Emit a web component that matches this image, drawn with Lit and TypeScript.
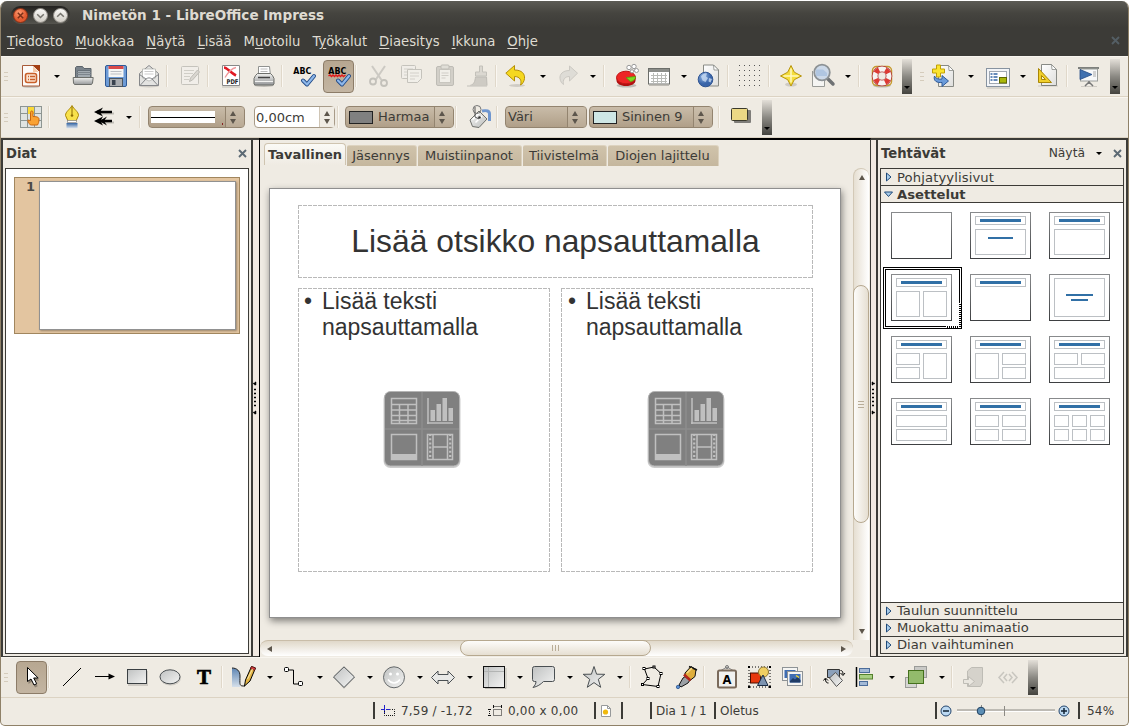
import { LitElement, html, svg, css } from "lit";
import { customElement } from "lit/decorators.js";

/** A bar entry: centre on the bar, width, content. */
type Item = [number, number, unknown];

const icon = (body: unknown, faded = false) =>
  html`<svg class=${faded ? "ic faded" : "ic"} width="26" height="26" viewBox="0 0 26 26">${body}</svg>`;

const page = svg`<path d="M5.5 2.5h10l5 5v16h-15z" fill="url(#paper)" stroke="#888a85"/><path d="M15.5 2.500l.5 5 4.500 0z" fill="#fff" stroke="#888a85" stroke-width=".8"/>`;
const check = svg`<path d="M12 17.500l4 4 7-8.500" fill="none" stroke="#204a87" stroke-width="4" stroke-linejoin="round" stroke-linecap="round"/><path d="M12 17.500l4 4 7-8.500" fill="none" stroke="#8db7ea" stroke-width="2.200" stroke-linejoin="round" stroke-linecap="round"/>`;
const abcText = svg`<text x="2.300" y="11" font-size="9.500" font-weight="700" fill="#000" textLength="18" lengthAdjust="spacingAndGlyphs">ABC</text>`;

const I = {
  fresh: svg`<ellipse cx="13" cy="23.500" rx="9" ry="1.300" fill="#0003"/><path d="M4.500 2.500h11l6 6v14.500h-17z" fill="#fdfaf7" stroke="#a85a38"/><path d="M14 2h8v7z" fill="#a33e12"/><path d="M15 3.500l5.500 5.500h-5.500z" fill="#f6c9a8"/><rect x="7.500" y="10.500" width="11" height="9" rx="2" fill="#fbe3d0" stroke="#c9602a" stroke-width="1.600"/><path d="M10 13.500h1M12 13.500h5M10 16.500h1M12 16.500h5" stroke="#c9602a" stroke-width="1.300"/>`,
  open: svg`<path d="M5.500 15V4.500l1-1h6l1.500 2h7v9z" fill="#7b848c" stroke="#5c646b"/><path d="M7.500 7.500h13v8h-13z" fill="#a3abb1" stroke="#69727a"/><path d="M7 9.500h14M7 11.500h14" stroke="#7d858c"/><path d="M3.200 14.500h20l-.7 5.500-1 1.500h-17l-1-1.500z" fill="url(#grey)" stroke="#6d6f6b"/>`,
  save: svg`<rect x="2.500" y="2.500" width="21" height="21" rx="1.500" fill="#6d9bd6" stroke="#2f5a97"/><rect x="5.500" y="3" width="15" height="11" fill="#f6f6f4"/><rect x="5.500" y="3" width="15" height="3" fill="#d94a4a"/><path d="M7.500 8.500h11M7.500 11h11" stroke="#bcbfc4"/><rect x="6.500" y="15.500" width="13" height="8" fill="#a9acb0" stroke="#4c5660"/><rect x="9" y="17" width="3.500" height="5" fill="#39424e"/>`,
  mail: svg`<ellipse cx="13" cy="23" rx="10" ry="1.500" fill="#0002"/><path d="M3.500 10.500L13 2.500l9.500 8v12h-19z" fill="#e3e3e1" stroke="#85878a"/><path d="M6.500 15V6h13v9L13 18z" fill="#fff" stroke="#aaaca8" stroke-width=".7"/><path d="M8.500 8.500h9M8.500 11h9" stroke="#ccc"/><path d="M3.500 11.500l6.500 4.500-6 6.500M22.500 11.500L16 16l6 6.500M10 16c2-1.500 4-1.500 6 0" fill="none" stroke="#85878a"/>`,
  edit: svg`<rect x="4.500" y="3.500" width="17" height="18" rx="1" fill="#f3f2ef" stroke="#9d9c97"/><path d="M7 7.500h10M7 10.500h9M7 13.500h6M7 16.500h5" stroke="#b3b2ad"/><path d="M12.500 18.500l1-3.500 7-8 2 2-7 8z" fill="#c4c3be" stroke="#8f8e89"/>`,
  pdf: svg`<path d="M4.500 2.500h17v20h-17z" fill="#fff" stroke="#888"/><path d="M4 24h18" stroke="#0003"/><path d="M6 4.500c3 0 6 5 12 8" stroke="#e11923" stroke-width="2.600" fill="none"/><path d="M18 4.500c-5 1-8 5-11 10" stroke="#f0999c" stroke-width="1.300" fill="none"/><text x="8.500" y="21.300" font-size="6.500" font-weight="700" fill="#222" textLength="12" lengthAdjust="spacingAndGlyphs">PDF</text>`,
  print: svg`<ellipse cx="13" cy="22.500" rx="10" ry="1.500" fill="#0003"/><path d="M7.500 13V3.500h11l1 9.500z" fill="#fff" stroke="#909290"/><path d="M9.500 6h7M9.500 8.500h7" stroke="#bbb"/><path d="M4.500 12.500l2-2h13l2 2 1.500 3v5.500l-1 1h-18l-1-1v-5.500z" fill="url(#grey)" stroke="#6d6f6b"/><path d="M7 14.500h12" stroke="#444" stroke-width="1.500"/><path d="M4 18.500h18" stroke="#f2f2f0"/>`,
  abc: svg`${abcText}${check}`,
  abcAuto: svg`${abcText}<path d="M2.500 13l1.500-1 1.500 1.500 1.500-1.500 1.500 1.500 1.500-1.500 1.500 1.500 1.500-1.500 1.500 1.500 1.500-1.500 1.500 1.500 2-1.500" fill="none" stroke="#e01b1b" stroke-width="1.500"/>${check}`,
  cut: svg`<path d="M6 3l9.500 14M19 3L9.500 17" stroke="#aaa9a4" stroke-width="2" fill="none"/><circle cx="7" cy="18.500" r="3" fill="none" stroke="#999893" stroke-width="1.800"/><circle cx="18" cy="20" r="3" fill="none" stroke="#999893" stroke-width="1.800"/>`,
  copy: svg`<rect x="2.500" y="2.500" width="14" height="13" rx="1" fill="#f1f0ed" stroke="#9d9c97"/><path d="M5 6h9M5 9h9M5 12h5" stroke="#b9b8b3"/><path d="M8.500 6.500h14v9l-4 4h-10z" fill="#f4f3f0" stroke="#9d9c97"/><path d="M11 10h9M11 13h9M11 16h5" stroke="#b9b8b3"/>`,
  paste: svg`<rect x="4.500" y="3.500" width="17" height="19" rx="1.500" fill="#b7b5ae" stroke="#8f8e89"/><rect x="7.500" y="6.500" width="11" height="13" fill="#f4f3f0" stroke="#a3a29d"/><rect x="9" y="2" width="8" height="4" rx="1" fill="#d3d2cd" stroke="#8f8e89"/><path d="M9.500 10h7M9.500 12.500h7M9.500 15h4" stroke="#b3b2ad"/>`,
  brush: svg`<path d="M14.500 3h3v6h4v4h-11v-4h4z" fill="#c9c7c1" stroke="#999893"/><path d="M10.500 14h11l.5 8.500H5c4-1 5-4 5.500-8.500z" fill="#aeaca6" stroke="#8f8e89"/><path d="M2 23h20" stroke="#b3b2ad" stroke-width="1.500"/>`,
  undo: svg`<ellipse cx="14" cy="22.500" rx="8" ry="1.500" fill="#0002"/><path d="M2.800 10.200L11.500 2.500v4.500c7.500 0 10.500 4 10 8.500-.3 3-2 5.500-4 6.500 1.500-4.500-.5-8.500-6-8.500v4.500z" fill="#f5d820" stroke="#b58f08" stroke-linejoin="round"/>`,
  redo: svg`<path d="M22.500 10.200L14.500 3v4.500c-7 0-10 4-9.500 8 .3 3 2 5 3.500 6-1-4.500 1-8 6-8v4.500z" fill="#cfceca" stroke="#a8a7a2" stroke-linejoin="round"/>`,
  chart: svg`<ellipse cx="12.500" cy="22.500" rx="10" ry="2" fill="#0003"/><path d="M2.500 14.500v3c0 3 4 5.500 9.500 5.500s9.500-2.500 9.500-5.500v-3z" fill="#b01010"/><ellipse cx="12" cy="14.500" rx="9.500" ry="6.300" fill="#ee2626" stroke="#c11616"/><path d="M12 14.500l9.500-1c.3 2.500-2 4.500-5 5.200z" fill="#7bd91f" stroke="#4f9a09" stroke-width=".7"/><circle cx="15" cy="4.500" r="2.200" fill="#fff" stroke="#999"/><circle cx="20" cy="3.500" r="2.200" fill="#fff" stroke="#999"/><circle cx="22.500" cy="7.500" r="2" fill="#fff" stroke="#999"/><circle cx="18" cy="8.300" r="1.600" fill="#fff" stroke="#999"/>`,
  table: svg`<rect x="2.500" y="5.500" width="21" height="15.500" fill="#fff" stroke="#6c6e6a"/><path d="M3 6h20v3H3z" fill="#8b8d89"/><path d="M5 12.500h16M5 15.500h16M5 18.500h16M7.500 10v10M11.500 10v10M15.500 10v10M19.500 10v10" stroke="#b9bbb7"/><path d="M3 22.500h20" stroke="#0003"/>`,
  web: svg`<g transform="translate(2 -.500)">${page}</g><circle cx="9.500" cy="16.500" r="7.300" fill="url(#globe)" stroke="#2f5492"/><path d="M5 13.500c2-3 4-3.500 6-3l-1 3 2 1.500-2.500 4-3-1.500zM13 15l3 1-1.500 3.500-2-1z" fill="#c2d6f0" opacity=".85"/>`,
  grid: svg`${[3, 8, 13, 18, 23].map((y) => [2, 7, 12, 17, 22].map((x) => svg`<rect x=${x} y=${y - 1} width="1" height="1" fill="#555"/>`))}`,
  star4: svg`<ellipse cx="13" cy="21.500" rx="6" ry="2" fill="#0002"/><path d="M13 2.500l3.300 6.700 7.200 3.800-7.200 3.700L13 23l-3.300-6.300L2.500 13l7.200-3.800z" fill="#f4dd3c" stroke="#b9960f" stroke-linejoin="round"/><path d="M13 5.500v14M5.500 13h15" stroke="#fff9c0" stroke-width="1.500"/>`,
  zoom: svg`<path d="M2.500 8v15.500h12V10" fill="#f5f5f3" stroke="#999b97"/><path d="M17 15l6 6" stroke="#6f7274" stroke-width="3.500" stroke-linecap="round"/><circle cx="12" cy="9.500" r="7.800" fill="#ccd9e9" stroke="#8d9295" stroke-width="1.800"/><path d="M6 13V6.500h7l4 3.500v3z" fill="#a9c1df" opacity=".8"/>`,
  help: svg`<ellipse cx="13" cy="22.500" rx="9" ry="2" fill="#0003"/><rect x="3.500" y="3.500" width="19" height="19" rx="4" fill="none" stroke="#c69a2d" stroke-width="1.500"/><circle cx="13" cy="13" r="7" fill="none" stroke="#b13a3a" stroke-width="6.600"/><circle cx="13" cy="13" r="7" fill="none" stroke="#f6f4f2" stroke-width="5"/><circle cx="13" cy="13" r="7" fill="none" stroke="#dd3a34" stroke-width="5" stroke-dasharray="4.500 6.495" stroke-dashoffset="-3.250"/>`,
  newSlide: svg`<g transform="translate(2 0)">${page}</g><path d="M6 2.500h4v4h4v4h-4v4H6v-4H2v-4h4z" fill="#fbe42f" stroke="#c1a005" transform="translate(-.500 -.500)"/><path d="M3.500 13c-1.500 5 2.500 7 7.500 6.500v4L17.500 18 11 12.500v3.500c-3 .3-6 0-7.500-3z" fill="#6b9bda" stroke="#2f5a97"/>`,
  layout: svg`<rect x="1.500" y="5.500" width="23" height="18" fill="#f3f5f8" stroke="#8793a0"/><rect x="4.500" y="8.500" width="17" height="12" fill="#fff" stroke="#a0a8b2"/><path d="M5.500 11h2M8.500 11h4M5.500 14h2M8.500 14h4M5.500 17h2M8.500 17h4" stroke="#3465a4" stroke-width="1.300"/><rect x="14.500" y="14.500" width="7" height="5.500" fill="#a9b80b" stroke="#5f6804"/><path d="M2 25h23" stroke="#0003"/>`,
  design: svg`<g transform="translate(1 -1)">${page}</g><path d="M3.500 5.500v14h13z" fill="#f0cf2c" stroke="#a98605"/><path d="M6.500 12.500v4h4z" fill="#fbf3cd" stroke="#a98605"/><path d="M3 23h20" stroke="#0002"/>`,
  present: svg`<path d="M2 5h21" stroke="#7e807d" stroke-width="2"/><rect x="4.500" y="6" width="17" height="12" fill="#f7f8f9" stroke="#9c9f9c"/><path d="M4 6.500l12 5-12 5z" fill="#3f70b0" stroke="#234a85" stroke-width=".8"/><path d="M17 9h3M17 11h3M17 13h3" stroke="#aaa"/><path d="M13 18v3M13 19l-4 4M13 19l4 4" stroke="#777" stroke-width="1.500"/><path d="M5 23.500h16" stroke="#0002"/>`,
  tableHand: svg`<rect x="2.500" y="2.500" width="21" height="21" fill="#dfe3e1" stroke="#8d9592"/><path d="M9.500 2v22M16.500 2v22M2 9.500h22M2 16.500h22" stroke="#8d9592"/><path d="M10 3h6v7h-6z" fill="#fbd936"/><path d="M12.500 21c-2-2-3-3.500-2.500-5l2.500.5V8.500c0-2 2.500-2 2.500 0v4c3 0 6 .5 6 2.500 0 3-.5 4-1.500 6h-6z" fill="#f9a234" stroke="#c9660f"/>`,
  nib: svg`<path d="M13 1.500c2 4 6.500 6 6.500 10L17 17H9L6.500 11.500c0-4 4.500-6 6.500-10z" fill="#f8e14b" stroke="#a98605"/><path d="M13 2.500v8" stroke="#8c6d04"/><circle cx="13" cy="11.500" r="1.300" fill="#8c6d04"/><rect x="8.500" y="16.500" width="9" height="2" fill="#fff" stroke="#888" stroke-width=".7"/><path d="M7.500 19h11v5.500h-11z" fill="url(#blueFade)"/>`,
  lineEnds: svg`<path d="M6 9.500h17M9 18.500h14" stroke="#0003" stroke-width="2"/><path d="M6 8h15M9 17h12" stroke="#000" stroke-width="2.600"/><path d="M3 8l9-4.500-3 4.500 3 4.500zM3 17l9-4.500-2 3.500 6-3.500-3 4.500 3 4.500-6-3.500 2 3.500z" fill="#000"/>`,
  can: svg`<path d="M15 7c5-1 7.500 0 7.500 3v7" fill="none" stroke="#6f96cf" stroke-width="3"/><path d="M3 16L12 7l8 8-8 8.500-6.500-1z" fill="url(#can)" stroke="#6d6f6b"/><path d="M5.500 15.500L12 9.500M8.500 18.500l6.500-6.500" stroke="#fff" stroke-width="1.500"/><ellipse cx="10" cy="5.500" rx="4" ry="4" fill="none" stroke="#777"/><path d="M8 3v10l4 2" fill="none" stroke="#555"/><circle cx="12.500" cy="13.500" r="1.300" fill="#333"/>`,
  shadow: svg`<rect x="5" y="6" width="17" height="13" rx="1" fill="#0007"/><rect x="2.500" y="4.500" width="16" height="12" rx="1" fill="#ebd885" stroke="#3b3a2c"/>`,
  pointer: svg`<path d="M8.500 4.500v14l3.500-2.500 3 6 2.700-1.300-3-5.700h4.500z" fill="#0004" transform="translate(1 1.500)"/><path d="M8.500 3.500v14l3.500-2.500 3 6 2.700-1.300-3-5.700h4.500z" fill="#fff" stroke="#000"/>`,
  line: svg`<path d="M4 22L22 4" stroke="#000"/>`,
  arrow: svg`<path d="M3 12.500h14" stroke="#000"/><path d="M16.500 9.500l6.500 3-6.500 3z" fill="#000"/>`,
  rect: svg`<rect x="4" y="7" width="20" height="15" fill="#0002"/><rect x="3.500" y="5.500" width="19" height="14" fill="url(#shape)" stroke="#3a3f42"/>`,
  ellipse: svg`<ellipse cx="13.500" cy="14" rx="10.500" ry="7.500" fill="#0002"/><ellipse cx="13" cy="12.800" rx="10" ry="7" fill="url(#shape)" stroke="#4a4f52"/>`,
  text: svg`<text x="13" y="20" text-anchor="middle" class="serif" font-size="21" font-weight="700" fill="#000" stroke="#000" stroke-width=".700">T</text>`,
  curve: svg`<path d="M1 4c5 0 8 3 8 8v11H1z" fill="url(#curveBlue)"/><path d="M1 4c5 0 8 3 8 8 0 7-1 10 3 10h2" fill="none" stroke="#222"/><path d="M13.500 22l1-6 6-13.500 4 1.500-5.500 13z" fill="#e2b343" stroke="#000"/><path d="M19.500 4.500l1-2 4 1.500-1 2.500z" fill="#d84040" stroke="#5a1313" stroke-width=".7"/><path d="M16.500 15l5-10" stroke="#fae7a8"/>`,
  connector: svg`<path d="M6 6h6.500v14H20" fill="none" stroke="#000"/><rect x="3.500" y="3.500" width="4" height="4" rx="1" fill="#fff" stroke="#000"/><rect x="17.500" y="17.500" width="4" height="4" rx="1" fill="#fff" stroke="#000"/>`,
  diamond: svg`<path d="M13 4l10.500 10L13 25 3 14z" fill="#0002"/><path d="M13 2.800L23.500 13 13 23.500 2.500 13z" fill="url(#shape)" stroke="#4a4f52"/>`,
  smiley: svg`<circle cx="13" cy="13.300" r="10.500" fill="url(#shape)" stroke="#65696b"/><circle cx="9.500" cy="10" r="1.500" fill="#fff"/><circle cx="16.500" cy="10" r="1.500" fill="#fff"/><path d="M7 15.500c3 4.500 9 4.500 12 0" fill="none" stroke="#fff" stroke-width="1.500"/>`,
  both: svg`<path d="M1.500 13.500L8 7v3.500h10V7l6.500 6.500L18 20v-3.500H8V20z" fill="#e9e9e7" stroke="#4a4f52"/>`,
  flow: svg`<path d="M4 24.500h21V4" fill="none" stroke="#0003"/><rect x="2.500" y="2.500" width="21" height="21" fill="url(#shape)" stroke="#111"/><path d="M7.500 3v20M3 7.500h20" stroke="#b2b4b3"/>`,
  callout: svg`<path d="M4.500 2.500h18q2 0 2 2v11q0 2-2 2h-9c-3 3-6 5-10.500 6 2-2 3-4 3-6H4.500q-2 0-2-2v-11q0-2 2-2z" fill="url(#shape)" stroke="#4a4f52"/>`,
  star5: svg`<path d="M13 2.500l2.600 7.700 8.200.1-6.500 5 2.400 8-6.700-4.700-6.700 4.700 2.400-8-6.500-5 8.200-.1z" fill="url(#shape)" stroke="#4a4f52"/>`,
  points: svg`<path d="M5.500 5L15 3l7 6.500-3 13L3.500 20.500 9 14.500z" fill="none" stroke="#000"/>${[[5, 4.5], [15, 3], [22, 9.5], [19, 22.5], [3.5, 20.5], [9, 14.5]].map(([x, y]) => svg`<rect x=${x - 1} y=${y - 1} width="2" height="2" fill="#fff" stroke="#000"/>`)}`,
  glue: svg`<path d="M5 21l4-7 3-2 4 4-2 3-7 4z" fill="#9ba0a5" stroke="#111"/><path d="M11 9l6-6.500 5 3-1 7-5 4-5-4z" fill="#dfae3c" stroke="#111"/><path d="M10 10.500l6.500 6" stroke="#b3261b" stroke-width="2.500"/><path d="M15 2.500l8 3.500" stroke="#111" stroke-width="1.500"/><path d="M13 9l5-5" stroke="#f7dc8c" stroke-width="1.500"/><circle cx="4" cy="23" r="1.700" fill="#5b8fd2" stroke="#204a87" stroke-width=".7"/>`,
  fontwork: svg`<path d="M6 7l7-4 7 4" fill="none" stroke="#888"/><circle cx="13" cy="3" r="1.500" fill="none" stroke="#777"/><rect x="4" y="6.500" width="18" height="17" rx="1.500" fill="#f1f1ef" stroke="#7a6a5b" stroke-width="2"/><text x="13" y="19.500" text-anchor="middle" font-size="11.500" font-weight="700" fill="#000">A</text>`,
  fromFile: svg`<rect x="3" y="3" width="21" height="20" fill="none" stroke="#000" stroke-dasharray="1 2"/><rect x="4.500" y="9" width="10" height="10" fill="#e8380d" stroke="#4a0d00"/><circle cx="17.500" cy="8" r="5" fill="#f0cf62" stroke="#8b7330"/><path d="M17 11l5 10.500H11.500z" fill="#7c93b0" stroke="#1b2c44"/><path d="M2 2h2v2H2zM23 2h2v2h-2zM2 22h2v2H2zM23 22h2v2h-2z" fill="#000"/>`,
  gallery: svg`<rect x="2.500" y="3.500" width="15" height="13" fill="#f5f5f3" stroke="#8e9396"/><rect x="4.500" y="6" width="11" height="8" fill="#3f6db2"/><rect x="7.500" y="7.500" width="15" height="14" fill="#f5f5f3" stroke="#8e9396"/><rect x="9.500" y="10" width="11" height="8.500" fill="#3f6db2"/><path d="M10 17l3-3 2 1.500 2.500-2.500 3 3v2.500H10z" fill="#1f3b66"/><path d="M16 11.500l3 2" stroke="#f4d92d" stroke-width="1.500"/>`,
  rotate: svg`<path d="M6.500 5.500h12v8h-12z" fill="#8ba0ba" stroke="#333"/><path d="M8.500 14l6-5.500 7 8-6 6z" fill="url(#shape)" stroke="#555"/><path d="M19.500 6.500c2 0 2.500 1.500 2.500 4M4.500 15c0 3 1 4 3 4M2.500 16.500l2-2.500 2.500 2.500M19.500 9l2.500 2.500 2-2.500" fill="none" stroke="#000"/>`,
  align: svg`<path d="M4.500 3v20" stroke="#000" stroke-width="1.500"/><rect x="7.500" y="4.500" width="10" height="4" fill="#a3b9d6" stroke="#4b6c9a"/><rect x="7.500" y="10.500" width="13" height="4.500" fill="#a9cf83" stroke="#54802c"/><rect x="7.500" y="17.500" width="8" height="4" fill="#a3b9d6" stroke="#4b6c9a"/>`,
  arrange: svg`<rect x="11.500" y="2.500" width="12" height="11" fill="#c9c9c6" stroke="#9a9b98"/><rect x="2.500" y="13.500" width="11" height="10" fill="#d5d5d2" stroke="#9a9b98"/><rect x="5.500" y="6.500" width="15" height="13" fill="#93bb6c" stroke="#44701c"/>`,
  extrude: svg`<path d="M6.500 7l4-3.500h11v15l-2 4h-13z" fill="#bcbab4" stroke="#8f8e89"/><path d="M2.500 15.500h5v-3l6 5-6 5v-3h-5z" fill="#e4e2dd" stroke="#8f8e89"/>`,
  chevrons: svg`<path d="M9 8l-5 5.500 5 5.500M12 10l-3 3.500 3 3.500M17 8l5 5.500-5 5.500M14 10l3 3.500-3 3.500" fill="none" stroke="#a3a29d" stroke-width="1.500"/>`,
};

const down = html`<i class="down"></i>`;
const sep = html`<i class="sep"></i>`;
const grip = html`<i class="grip"></i>`;
const more = html`<i class="more"><i class="down"></i></i>`;
const stepper = html`<span class="step"><i class="up"></i><i class="dn"></i></span>`;

const ic = (c: number, body: unknown, faded = false): Item => [c, 26, icon(body, faded)];
const dn = (c: number): Item => [c, 6, down];
const sp = (c: number): Item => [c, 2, sep];
const gr = (c: number): Item => [c, 4, grip];
const ov = (c: number): Item => [c, 10, more];
const on = (c: number, body: unknown): Item => [c, 31, html`<span class="pressed">${icon(body)}</span>`];

const standard: Item[] = [
  gr(6), ic(31, I.fresh), dn(57), ic(83, I.open), ic(116, I.save), ic(149, I.mail), sp(167), ic(190, I.edit, true), sp(208),
  ic(231, I.pdf), ic(264, I.print), sp(282), ic(304, I.abc), on(338.5, I.abcAuto), sp(356), ic(379, I.cut, true),
  ic(412, I.copy, true), ic(445, I.paste, true), ic(478, I.brush, true), sp(496), ic(516, I.undo), dn(543), ic(568, I.redo, true),
  dn(593), sp(604), ic(627, I.chart), ic(659, I.table), dn(684), ic(709, I.web), sp(728), ic(750, I.grid), sp(769),
  ic(791, I.star4), ic(823, I.zoom), dn(848), sp(859), ic(882, I.help), ov(907), gr(922), ic(944, I.newSlide), dn(971),
  ic(998, I.layout), dn(1023), ic(1048, I.design), sp(1067), ic(1089, I.present), ov(1115),
];

const formatting: Item[] = [
  gr(6), ic(31, I.tableHand), sp(49), ic(72, I.nib), ic(104, I.lineEnds), dn(129), sp(140),
  [196.5, 97, html`<span class="combo"><span class="linestyle"></span><b class="dot"></b>${stepper}</span>`],
  [294.5, 81, html`<span class="spin"><span class="grow">0,00cm</span>${stepper}</span>`],
  sp(338),
  [399.5, 109, html`<span class="combo"><i class="swatch gray"></i><span class="grow">Harmaa</span>${stepper}</span>`],
  sp(456), ic(480, I.can), sp(497),
  [546, 82, html`<span class="combo"><span class="grow near">Väri</span>${stepper}</span>`],
  [651, 124, html`<span class="combo"><i class="swatch blue"></i><span class="grow">Sininen 9</span>${stepper}</span>`],
  sp(719), ic(742, I.shadow), ov(767),
];

const drawing: Item[] = [
  gr(6), on(31.5, I.pointer), sp(49), ic(72, I.line), ic(105, I.arrow), ic(137, I.rect), ic(170, I.ellipse), ic(204, I.text), sp(222),
  ic(244, I.curve), dn(270), ic(294, I.connector), dn(320), ic(344, I.diamond), dn(370), ic(394, I.smiley), dn(420),
  ic(443, I.both), dn(470), ic(494, I.flow), dn(520), ic(543, I.callout), dn(570), ic(594, I.star5), dn(620), sp(630),
  ic(652, I.points), ic(687, I.glue), sp(704), ic(727, I.fontwork), ic(759, I.fromFile), ic(793, I.gallery), sp(811),
  ic(834, I.rotate), ic(865, I.align), dn(892), ic(916, I.arrange), dn(942), sp(952), ic(974, I.extrude, true),
  ic(1008, I.chevrons, true), ov(1033),
];

const menus: [string, string, string][] = [
  ["", "T", "iedosto"], ["", "M", "uokkaa"], ["", "N", "äytä"], ["", "L", "isää"], ["M", "u", "otoilu"],
  ["T", "y", "ökalut"], ["", "D", "iaesitys"], ["", "I", "kkuna"], ["", "O", "hje"],
];

const tabs: [string, number][] = [["Jäsennys", 70], ["Muistiinpanot", 104], ["Tiivistelmä", 84], ["Diojen lajittelu", 111]];

type Box = [number, number, number, number];
const T: Box = [5, 4, 51, 9];
const B: Box = [10, 7, 41, 3];
const layouts: { boxes: Box[]; bars: Box[] }[] = [
  { boxes: [], bars: [] },
  { boxes: [T, [5, 17, 51, 26]], bars: [B, [18, 25, 25, 2]] },
  { boxes: [T, [5, 17, 51, 26]], bars: [B] },
  { boxes: [T, [5, 17, 24, 26], [32, 17, 24, 26]], bars: [B] },
  { boxes: [T], bars: [B] },
  { boxes: [[5, 4, 51, 39]], bars: [[17, 20, 27, 2], [22, 25, 17, 2]] },
  { boxes: [T, [5, 17, 24, 12], [5, 31, 24, 12], [32, 17, 24, 26]], bars: [B] },
  { boxes: [T, [5, 17, 24, 26], [32, 17, 24, 12], [32, 31, 24, 12]], bars: [B] },
  { boxes: [T, [5, 17, 24, 12], [32, 17, 24, 12], [5, 31, 51, 12]], bars: [B] },
  { boxes: [T, [5, 17, 51, 12], [5, 31, 51, 12]], bars: [B] },
  { boxes: [T, [5, 17, 24, 12], [32, 17, 24, 12], [5, 31, 24, 12], [32, 31, 24, 12]], bars: [B] },
  { boxes: [T, [5, 17, 15, 12], [23, 17, 15, 12], [41, 17, 15, 12], [5, 31, 15, 12], [23, 31, 15, 12], [41, 31, 15, 12]], bars: [B] },
];

const placeholder = html`<svg class="ph" width="80" height="80" viewBox="-2 -2 80 80">
  <rect x="-.5" y="1" width="77" height="76" rx="7" fill="#0003"/>
  <rect x=".5" y=".5" width="75" height="74.500" rx="6" fill="#808080" stroke="#b5b5b5"/>
  <path d="M38 1v74M1 38h74" stroke="#8c8c8c" stroke-width="1.500"/>
  <g fill="none" stroke="#c0c0c0" stroke-width="1.500">
    <rect x="7.500" y="7.500" width="25" height="25"/><path d="M7 13.500h26M7 19h26M7 24.500h26M7 29.500h26M15.500 13.500v19M24 13.500v19"/>
    <path d="M44 7v26M43 32h26"/>
    <rect x="7.500" y="43.500" width="25" height="25"/>
    <rect x="43.500" y="43.500" width="25" height="25"/><path d="M49 43v26M63.500 43v26M49 56h15"/>
    <path d="M46.200 43v26M66.200 43v26" stroke-dasharray="2 2.200" stroke-width="2.200"/>
  </g>
  <path d="M46.500 19h4.500v11h-4.500zM52.500 13h4.500v17h-4.500zM58.500 7h4.500v23h-4.500zM64.500 17h4.500v13h-4.500zM8 63h24v5.500H8z" fill="#c0c0c0"/>
</svg>`;

const closeX = html`<svg width="9" height="9" viewBox="0 0 9 9"><path d="M1 1l7 7M8 1l-7 7" stroke="#5c6a74" stroke-width="1.900"/></svg>`;
const collapsed = html`<svg width="9" height="10" viewBox="0 0 9 10"><path d="M2.500 1l4.500 4-4.500 4z" fill="#a9cdea" stroke="#1f4a7a"/></svg>`;
const expanded = html`<svg width="9" height="9" viewBox="0 0 9 9"><path d="M.5 2h8l-4 4.500z" fill="#a9cdea" stroke="#1f4a7a"/></svg>`;
const handle = (dir: number) => html`<svg width="5" height="36" viewBox="0 0 5 36">
  <path d=${dir < 0 ? "M3 2v3h-1.500v-1h-1v-1h1.500v-1zM3 31v3h-1.500v-1h-1v-1h1.500v-1z" : "M1 2v3h1v-1h1.500v-1h-1.500v-1zM1 31v3h1v-1h1.500v-1h-1.500v-1z"} fill="#000" stroke="#000" stroke-width=".5"/>
  <path d="M1 9.500h2M1 13.500h2M1 17.500h2M1 21.500h2M1 25.500h2" stroke="#000" stroke-width="1.500"/></svg>`;

@customElement("app-root")
export class AppRoot extends LitElement {
  static styles = css`
    :host { display: block; width: 1130px; height: 727px; box-sizing: border-box; padding: 1px 1px 1px 0; background: #fff; overflow: hidden;
      font: 13px/16px "DejaVu Sans", sans-serif; color: #3c3b37; cursor: default; }
    * { box-sizing: border-box; }
    svg { display: block; flex: none; }
    svg text { font-family: "DejaVu Sans", sans-serif; }
    svg text.serif { font-family: "Liberation Serif", serif; }
    .defs { position: absolute; }
    .win { height: 725px; border: 1px solid #8f8168; border-top: 0; border-radius: 7px 7px 5px 5px; background: #efebe3; overflow: hidden; display: flex; flex-direction: column; }
    .title { height: 27px; flex: none; display: flex; align-items: center; padding: 1px 0 0 10px; background: linear-gradient(#5c5b55, #45443f 45%, #3c3b37); color: #dfdbd2; font-weight: 700; font-size: 13.550px; }
    .ctl { width: 59px; height: 18px; border-radius: 9px; background: linear-gradient(#22211f, #55544e); display: flex; align-items: center; justify-content: space-between; padding: 0 1px; margin-right: 12px; }
    .menu { height: 28px; flex: none; background: #3c3b37; color: #dfdbd2; display: flex; gap: 12px; align-items: center; padding: 0 8px 1px 6px; font-size: 13.230px; }
    .menu u { text-underline-offset: 2px; text-decoration-thickness: 1px; }
    .menu svg { margin-left: auto; opacity: .75; margin-top: -2px; }
    .bar { height: 41px; flex: none; display: flex; align-items: center; border-bottom: 1px solid #dcd3c3; box-shadow: inset 0 1px #f8f5ef; }
    .bar > * { flex: none; display: flex; justify-content: center; }
    .faded { opacity: .5; }
    .down { display: block; border: 3px solid transparent; border-top: 3px solid #000; border-bottom: 0; width: 6px; height: 3px; }
    .sep { width: 2px; height: 22px; background: linear-gradient(90deg, #e0d8ca 50%, #faf7f2 50%); }
    .grip { width: 4px; height: 9px; background: repeating-linear-gradient(#d5ccbc 0 1px, transparent 1px 4px); }
    .more { width: 10px; height: 35px; display: flex; align-items: flex-end; justify-content: center; padding-bottom: 5px; background: linear-gradient(#e3dfd8, #8b8983 50%, #45443f); margin-top: 1px; }
    .pressed { width: 31px; height: 33px; border: 1px solid #8c7c68; border-radius: 4px; background: linear-gradient(#b7a791, #c3b5a2); display: flex; align-items: center; justify-content: center; }
    .combo, .spin { width: 100%; height: 22px; border: 1px solid #93846f; border-radius: 4px; background: linear-gradient(#c9bca9, #b09f88); display: flex; align-items: center; padding-left: 3px; }
    .spin { background: #fff; border-color: #a89b88; }
    .spin .grow { margin-left: -2px; padding-top: 1px; }
    .grow { flex: 1; white-space: nowrap; }
    .near { margin-left: -1px; }
    .step { width: 19px; align-self: stretch; border-left: 1px solid #93846f; display: flex; flex-direction: column; align-items: center; justify-content: center; gap: 3px; background: #cfc3b155; padding-right: 5px; }
    .spin .step { width: 15px; background: #f0ece4; border-color: #cfc5b5; padding: 0; }
    .up, .dn { border: 3px solid transparent; border-bottom: 5px solid #5d564c; border-top: 0; }
    .dn { border-top: 5px solid #5d564c; border-bottom: 0; }
    .linestyle { width: 64px; height: 12px; margin: -1px auto 0 -1px; background: linear-gradient(#fff 6px, #000 6px 7px, #fff 7px); }
    .dot { width: 1px; height: 2px; background: #822; align-self: flex-end; margin: 0 2px 2px 0; }
    .swatch { width: 24px; height: 13px; border: 1px solid #222; margin-right: 5px; }
    .gray { background: #808080; }
    .blue { background: #cfe7e5; }
    .work { height: 519px; flex: none; display: grid; grid-template-columns: 252px 6px 612px 5px 1fr; }
    .panel { border: 2px solid #3c3b37; border-bottom-width: 1px; padding: 0 2px 2px; display: flex; flex-direction: column; min-width: 0; }
    .head { height: 28px; display: flex; align-items: center; font-weight: 700; font-size: 13.200px; padding: 0 2px 0 1px; justify-content: space-between; flex: none; }
    .head svg { margin-top: -1px; }
    .head .show { font-weight: 400; font-size: 12.300px; margin-left: auto; padding-right: 9px; margin-top: -2px; }
    .head .down { margin: -2px 11px 0 2px; }
    .list { flex: 1; border: 1px solid #3c3b37; background: #fff; padding: 8px; display: flex; flex-direction: column; }
    .entry { height: 157px; border: 1px solid #a1865e; background: #e3c5a0; display: flex; padding: 3px 3px 3px 11px; font-weight: 700; color: #4c4a45; line-height: 11px; gap: 4px; }
    .mini { flex: 1; background: #fff; border: 1px solid #919191; box-shadow: 1px 1px 2px #0005; }
    .split { display: flex; align-items: center; border-top: 2px solid #3c3b37; border-bottom: 1px solid #3c3b37; background: #f1e9e1; }
    .centre { border: solid #000; border-width: 2px 1px 0; border-right-color: #3c3b37; display: grid; grid-template: 28px 472px 17px / 593px 17px; overflow: hidden; }
    .tabs { grid-column: 1 / 3; display: flex; align-items: flex-start; padding: 3px 0 0 4px; gap: 1px; }
    .tab { height: 21px; margin-top: 2px; padding: 2px 1px 0 0; text-align: center; background: linear-gradient(#d0c3ab, #c5b79e); border-right: 1px solid #dbd1bd; border-top: 1px solid #ddd3c0; border-radius: 2px 3px 0 0; white-space: nowrap; }
    .tab.cur { width: 82px; height: 22px; margin-top: 0; padding: 3px 0 0; background: linear-gradient(#fbfaf6, #efebe3); border: 1px solid #cfc4b0; border-bottom: 0; border-radius: 4px 4px 0 0; font-weight: 700; }
    .canvas { padding: 20px 0 0 9px; overflow: hidden; }
    .slide { width: 572px; height: 430px; background: #fff; border: 1px solid #8f8f8f; box-shadow: 1px 3px 7px #0007; padding: 16px 27px 0 28px; display: grid; grid-template: 73px 284px / 252px 252px; gap: 10px 11px; font-family: "Liberation Sans", Arial, sans-serif; color: #333; }
    .outline { display: grid; grid-template: 100% / 100%; background:
      repeating-linear-gradient(90deg, #b9b9b9 0 4px, transparent 4px 5px) 0 0 / 100% 1px no-repeat,
      repeating-linear-gradient(90deg, #b9b9b9 0 4px, transparent 4px 5px) 0 100% / 100% 1px no-repeat,
      repeating-linear-gradient(#b9b9b9 0 4px, transparent 4px 5px) 0 0 / 1px 100% no-repeat,
      repeating-linear-gradient(#b9b9b9 0 4px, transparent 4px 5px) 100% 0 / 1px 100% no-repeat; }
    .heading { grid-column: 1 / 3; font-size: 31.800px; line-height: 73px; text-align: center; }
    .col { display: grid; grid-template: 101px 1fr / 24px 1fr; font-size: 23px; line-height: 26px; }
    .col:last-child { padding-left: 1px; }
    .col .bul { padding-left: 6px; }
    .col .ph { grid-column: 1 / 3; margin-left: 84px; }
    .vs { width: 16px; border-radius: 8px 8px 0 0; border-left: 1px solid #d3c9b7; border-top: 1px solid #d3c9b7; background: linear-gradient(90deg, #e6dfd2, #fff); display: flex; flex-direction: column; align-items: center; padding: 6px 0; }
    .vs .thumb { width: 16px; height: 238px; margin-top: 105px; margin-left: -1px; flex: none; border: 1px solid #b6a88f; border-radius: 8px; background: linear-gradient(90deg, #fdfcfa, #e6dfd2); display: flex; align-items: center; justify-content: center; }
    .vs .dn { margin-top: auto; }
    .hs { height: 16px; border-radius: 8px; border-top: 1px solid #c9bda8; background: linear-gradient(#e0d8c9, #fff); display: flex; align-items: center; padding: 0 7px; }
    .hs .thumb { width: 191px; height: 16px; margin-left: 188px; margin-top: -1px; border: 1px solid #b6a88f; border-radius: 8px; background: linear-gradient(#fdfcfa, #e6dfd2); display: flex; align-items: center; justify-content: center; }
    .lf, .rt { border: 3px solid transparent; border-right: 5px solid #5d564c; border-left: 0; }
    .rt { border-left: 5px solid #5d564c; border-right: 0; margin-left: auto; }
    .ribH { width: 7px; height: 6px; background: repeating-linear-gradient(90deg, #b9ad98 0 1px, transparent 1px 3px); }
    .ribV { width: 6px; height: 7px; background: repeating-linear-gradient(#b9ad98 0 1px, transparent 1px 3px); }
    .tasks { padding: 0; }
    .acc { height: 17px; flex: none; background: #efebe3; border-bottom: 1px solid #3c3b37; display: flex; align-items: center; gap: 4px; padding-left: 3px; line-height: 16px; font-size: 13.150px; }
    .acc.lead span { padding-top: 1px; letter-spacing: .12px; }
    .acc b { padding-top: 2px; }
    .acc.low { border-bottom: 0; border-top: 1px solid #3c3b37; }
    .layouts { flex: 1; display: grid; grid-template: repeat(4, 62px) / repeat(3, 79px); padding: 1px 0 0 2px; align-content: start; }
    .cell { padding: 8px; }
    .cell.sel { position: relative; width: 79px; height: 62px; border: 3px double #000; padding: 4px 5px; margin: 1px 0 0; }
    .cell.sel::after { content: ""; position: absolute; right: -2px; bottom: -2px; width: 2px; height: 25px; background: repeating-linear-gradient(#fff 0 1px, #000 1px 2px); }
    .cell.sel::before { content: ""; position: absolute; right: 0; bottom: -2px; width: 13px; height: 2px; background: repeating-linear-gradient(90deg, #fff 0 1px, #000 1px 2px); }
    .status { flex: 1; display: flex; align-items: center; font-size: 12px; padding-bottom: 2px; }
    .status > * { flex: none; white-space: nowrap; }
    .status .num { letter-spacing: .200px; }
    .status .wall { width: 2px; height: 17px; background: #3c3b37; display: block; }
  `;

  private bar(items: Item[]) {
    let edge = 1;
    return html`<div class="bar">${items.map(([c, w, content]) => {
      const gap = c - w / 2 - edge;
      edge = c + w / 2;
      return html`<div style="width:${w}px;margin-left:${gap}px">${content}</div>`;
    })}</div>`;
  }

  private status() {
    const wall = html`<i class="wall"></i>`;
    const entries: [number, number, unknown][] = [
      [373, 2, wall],
      [381, 15, html`<svg width="15" height="14" viewBox="0 0 15 14"><path d="M0 5.500h9M3.500 1v9" stroke="#22c" stroke-dasharray="4 1"/><path d="M3.500 7v4.500h10v-6h-4" fill="none" stroke="#111" stroke-dasharray="1 1"/></svg>`],
      [401, 72, html`<span class="num">7,59 / -1,72</span>`],
      [488, 15, html`<svg width="15" height="14" viewBox="0 0 15 14"><path d="M5.500 5.500h8v6h-8z" fill="none" stroke="#111" stroke-dasharray="1 1"/><path d="M1.500 5v7M5.500 2.500h8" stroke="#111" stroke-dasharray="1 1"/><path d="M0 5.500h3M0 11.500h3M5.500 1v3M13.500 1v3" stroke="#111"/></svg>`],
      [508, 72, html`<span class="num">0,00 x 0,00</span>`],
      [594, 2, wall],
      [600, 12, html`<svg width="12" height="14" viewBox="0 0 12 14"><path d="M1.500 1.500h6l3 3v8h-9z" fill="#fff" stroke="#97999a"/><path d="M7.500 1.500v3h3" fill="none" stroke="#97999a"/><circle cx="5.500" cy="8" r="2.600" fill="#f0b90d"/></svg>`],
      [621, 2, wall], [650, 2, wall],
      [656, 52, "Dia 1 / 1"],
      [714, 2, wall],
      [720, 44, "Oletus"],
      [935, 2, wall],
      [940, 12, html`<svg width="12" height="12" viewBox="0 0 12 12"><circle cx="6" cy="6" r="5" fill="#bcd9f2" stroke="#24466e"/><path d="M3 6h6" stroke="#123" stroke-width="1.500"/></svg>`],
      [957, 98, html`<svg width="98" height="14" viewBox="0 0 98 14"><path d="M0 6h98" stroke="#8c8a85"/><path d="M0 7.500h98" stroke="#fff"/><path d="M24.500 1v12M47.500 2v10" stroke="#8c8a85"/><circle cx="24" cy="7" r="3.800" fill="#5c8eb5" stroke="#1f3f5f"/></svg>`],
      [1058, 12, html`<svg width="12" height="12" viewBox="0 0 12 12"><circle cx="6" cy="6" r="5" fill="#bcd9f2" stroke="#24466e"/><path d="M3 6h6M6 3v6" stroke="#123" stroke-width="1.500"/></svg>`],
      [1078, 2, wall],
      [1087, 30, html`<span class="num">54%</span>`],
    ];
    let edge = 1;
    return html`<div class="status">${entries.map(([x, w, content]) => {
      const gap = x - edge;
      edge = x + w;
      return html`<span style="width:${w}px;margin-left:${gap}px">${content}</span>`;
    })}</div>`;
  }

  private layoutThumb(l: { boxes: Box[]; bars: Box[] }, sel: boolean) {
    return html`<div class=${sel ? "cell sel" : "cell"}><svg width="61" height="47" viewBox="0 0 61 47">
      <rect x=".5" y=".5" width="60" height="46" fill="#fff" stroke="url(#frame)"/>
      ${l.boxes.map(([x, y, w, h]) => svg`<rect x=${x + 0.5} y=${y + 0.5} width=${w - 1} height=${h - 1} fill="none" stroke="#bcc0c4"/>`)}
      ${l.bars.map(([x, y, w, h]) => svg`<rect x=${x} y=${y} width=${w} height=${h} fill="#3170a6"/>`)}
    </svg></div>`;
  }

  render() {
    const round = (fill: string, stroke: string, d: string, c: string) =>
      html`<svg width="17" height="17" viewBox="0 0 17 17"><circle cx="8.500" cy="8.500" r="7" fill=${fill} stroke=${stroke}/><path d=${d} fill="none" stroke=${c} stroke-width="1.500"/></svg>`;
    const column = html`<div class="outline col"><span class="bul">•</span><span>Lisää teksti<br>napsauttamalla</span>${placeholder}</div>`;
    return html`
      <svg class="defs" width="0" height="0"><defs>
        <linearGradient id="paper" x2="1" y2="1"><stop stop-color="#fff"/><stop offset="1" stop-color="#dededc"/></linearGradient>
        <linearGradient id="grey" x2="0" y2="1"><stop stop-color="#f0f0ee"/><stop offset="1" stop-color="#96989a"/></linearGradient>
        <linearGradient id="can" x2="1" y2="1"><stop stop-color="#fbfbfa"/><stop offset="1" stop-color="#b9bbba"/></linearGradient>
        <linearGradient id="shape" x2="1" y2="1"><stop stop-color="#bfc1c1"/><stop offset="1" stop-color="#f4f4f3"/></linearGradient>
        <linearGradient id="blueFade" x2="0" y2="1"><stop stop-color="#3465a4"/><stop offset="1" stop-color="#dfe6ee"/></linearGradient>
        <linearGradient id="curveBlue" x2="0" y2="1"><stop stop-color="#5f86b3"/><stop offset="1" stop-color="#d5dfea"/></linearGradient>
        <linearGradient id="frame" x2="0" y2="1"><stop stop-color="#888a8c"/><stop offset="1" stop-color="#3e4042"/></linearGradient>
        <radialGradient id="globe" cx=".35" cy=".3"><stop stop-color="#8fb4e3"/><stop offset="1" stop-color="#3a65a9"/></radialGradient>
        <radialGradient id="red" cx=".4" cy=".3"><stop stop-color="#ff9a70"/><stop offset="1" stop-color="#e05a30"/></radialGradient>
        <linearGradient id="knob" x2="0" y2="1"><stop stop-color="#fbfaf8"/><stop offset="1" stop-color="#cfcbc3"/></linearGradient>
      </defs></svg>
      <div class="win">
        <div class="title">
          <div class="ctl">
            ${round("url(#red)", "#8a3015", "M5.800 5.800l5.400 5.400M11.200 5.800l-5.400 5.400", "#7b3018")}
            ${round("url(#knob)", "#8c8983", "M5.200 7.200l3.300 3.300 3.300-3.300", "#75736d")}
            ${round("url(#knob)", "#8c8983", "M5.200 9.800l3.300-3.300 3.300 3.300", "#75736d")}
          </div>
          <span>Nimetön 1 - LibreOffice Impress</span>
        </div>
        <div class="menu">${menus.map(([a, u, b]) => html`<span>${a}<u>${u}</u>${b}</span>`)}${closeX}</div>
        ${this.bar(standard)} ${this.bar(formatting)}
        <div class="work">
          <div class="panel">
            <div class="head"><span>Diat</span>${closeX}</div>
            <div class="list"><div class="entry"><span>1</span><div class="mini"></div></div></div>
          </div>
          <div class="split">${handle(-1)}</div>
          <div class="centre">
            <div class="tabs">
              <div class="tab cur">Tavallinen</div>
              ${tabs.map(([name, w]) => html`<div class="tab" style="width:${w}px">${name}</div>`)}
            </div>
            <div class="canvas"><div class="slide">
              <div class="outline heading">Lisää otsikko napsauttamalla</div>
              ${column} ${column}
            </div></div>
            <div class="vs"><i class="up"></i><div class="thumb"><i class="ribV"></i></div><i class="dn"></i></div>
            <div class="hs"><i class="lf"></i><div class="thumb"><i class="ribH"></i></div><i class="rt"></i></div>
          </div>
          <div class="split">${handle(1)}</div>
          <div class="panel">
            <div class="head"><span>Tehtävät</span><span class="show">Näytä</span>${down}${closeX}</div>
            <div class="list tasks">
              <div class="acc lead">${collapsed}<span>Pohjatyylisivut</span></div>
              <div class="acc">${expanded}<b>Asettelut</b></div>
              <div class="layouts">${layouts.map((l, n) => this.layoutThumb(l, n === 3))}</div>
              ${["Taulun suunnittelu", "Muokattu animaatio", "Dian vaihtuminen"].map((t) => html`<div class="acc low">${collapsed}<span>${t}</span></div>`)}
            </div>
          </div>
        </div>
        ${this.bar(drawing)} ${this.status()}
      </div>`;
  }
}
